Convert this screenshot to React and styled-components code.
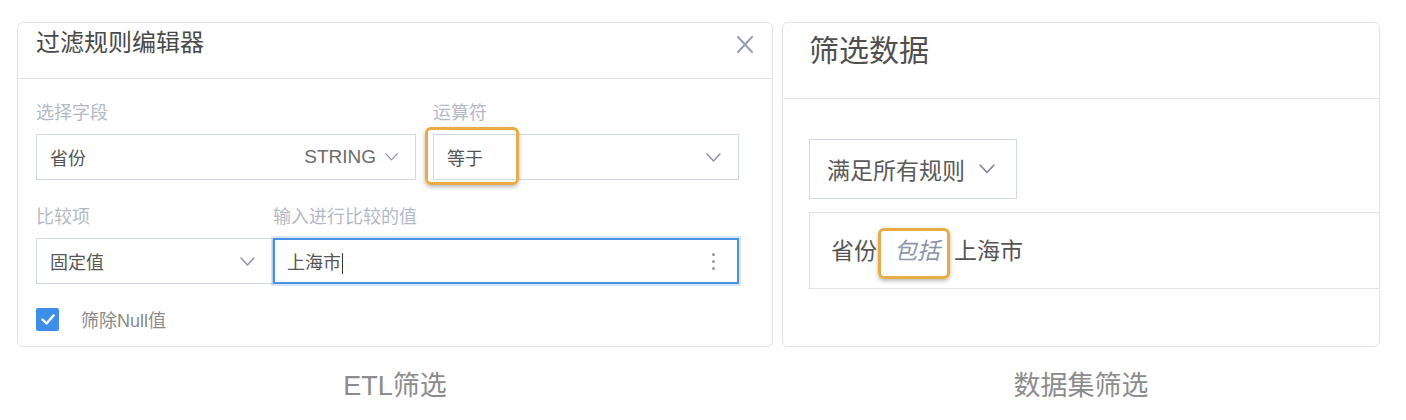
import React from "react";
import styled, { createGlobalStyle } from "styled-components";

const Global = createGlobalStyle`
  html, body { margin: 0; padding: 0; background: #fff; }
  body { font-family: "Liberation Sans", "Noto Sans CJK SC", sans-serif; }
  * { box-sizing: border-box; }
`;

const Page = styled.div`
  display: flex;
  align-items: flex-start;
  gap: 9px;
  padding: 22px 0 0 17px;
  width: 1406px;
  height: 420px;
`;

const Figure = styled.div`
  display: flex;
  flex-direction: column;
  align-items: center;
  width: ${(p) => p.$w}px;
`;

const Panel = styled.div`
  width: 100%;
  height: 325px;
  border: 1px solid #e3e3e3;
  border-radius: 6px;
  background: #fff;
  overflow: hidden;
`;

const Caption = styled.div`
  margin-top: 22px;
  font-size: 27px;
  line-height: 34px;
  color: #8c8c8c;
`;

/* ---------- Left: ETL editor ---------- */
const EditorHeader = styled.div`
  height: 56px;
  display: flex;
  align-items: flex-start;
  justify-content: space-between;
  padding: 4px 19px 0 18px;
  border-bottom: 1px solid #dfe4ec;
`;

const EditorTitle = styled.div`
  font-size: 24px;
  line-height: 32px;
  color: #4a4a4a;
`;

const CloseBtn = styled.svg`
  margin-top: 9px;
  width: 16px;
  height: 17px;
`;

const EditorBody = styled.div`
  padding: 22px 33px 0 18px;
`;

const Row = styled.div`
  display: grid;
  grid-template-columns: ${(p) => p.$cols};
  column-gap: ${(p) => p.$gap}px;
  margin-bottom: ${(p) => p.$mb}px;
`;

const Field = styled.div`
  display: flex;
  flex-direction: column;
  position: relative;
`;

const Label = styled.div`
  font-size: 18px;
  line-height: 24px;
  color: #b3bac6;
  margin-bottom: 9px;
`;

const Box = styled.div`
  position: relative;
  height: 46px;
  display: flex;
  align-items: center;
  padding: 0 ${(p) => (p.$active ? 16 : 17)}px 0 ${(p) => (p.$active ? 12 : 13)}px;
  border: ${(p) => (p.$active ? "2px solid #4a90e8" : "1px solid #d3d9e2")};
  box-shadow: ${(p) => (p.$active ? "0 0 0 2px rgba(74,144,232,0.22)" : "none")};
  background: #fff;
  font-size: 18px;
  color: #555;
  z-index: ${(p) => (p.$active ? 1 : 0)};
`;

const BoxText = styled.span`
  flex: 1;
  white-space: nowrap;
`;

const TypeTag = styled.span`
  font-size: 19px;
  color: #6b6b6b;
  margin-right: 9px;
`;

const Caret = styled.span`
  display: inline-block;
  width: 1px;
  height: 21px;
  background: #333;
  vertical-align: middle;
  margin-left: 1px;
`;

const Highlight = styled.div`
  position: absolute;
  left: ${(p) => p.$l}px;
  top: ${(p) => p.$t}px;
  width: ${(p) => p.$w}px;
  height: ${(p) => p.$h}px;
  border: 3px solid #e9ab45;
  border-radius: 6px;
  box-shadow: 0 2px 4px rgba(0, 0, 0, 0.28);
  pointer-events: none;
  z-index: 2;
`;

const Kebab = styled.span`
  display: flex;
  flex-direction: column;
  gap: 4px;
  margin-right: 6px;
  & > i {
    width: 3px;
    height: 3px;
    border-radius: 50%;
    background: #9a9a9a;
  }
`;

const CheckRow = styled.label`
  display: flex;
  align-items: center;
  gap: 22px;
  margin-top: 22px;
  font-size: 18px;
  color: #8a8a8a;
`;

const CheckBox = styled.span`
  width: 23px;
  height: 23px;
  border-radius: 2px;
  background: #3d8ee8;
  display: flex;
  align-items: center;
  justify-content: center;
`;

/* ---------- Right: dataset filter ---------- */
const DataHeader = styled.div`
  height: 76px;
  padding: 8px 26px 0;
  border-bottom: 1px solid #dfe4ec;
`;

const DataTitle = styled.div`
  font-size: 30px;
  line-height: 40px;
  color: #4f4f4f;
`;

const DataBody = styled.div`
  padding: 40px 0 0 26px;
  display: flex;
  flex-direction: column;
  align-items: flex-start;
  gap: 13px;
`;

const MatchSelect = styled.div`
  height: 60px;
  width: 208px;
  display: flex;
  align-items: center;
  gap: 14px;
  padding-left: 17px;
  border: 1px solid #d3d9e2;
  font-size: 23px;
  color: #5a5a5a;
`;

const RuleBox = styled.div`
  align-self: stretch;
  height: 77px;
  display: flex;
  align-items: center;
  padding-left: 21px;
  border: 1px solid #dfe3ea;
  border-right: none;
  font-size: 23px;
  line-height: 30px;
  color: #555;
`;

const Op = styled.span`
  position: relative;
  font-style: italic;
  color: #8b97aa;
  margin: 0 14px 0 17px;
`;

const Chevron = ({ w = 14, color = "#8a96a8" }) => (
  <svg width={w} height={w * 0.6} viewBox="0 0 14 8.4" fill="none">
    <path d="M1 1l6 6.4 6-6.4" stroke={color} strokeWidth="1.4" strokeLinecap="round" strokeLinejoin="round" />
  </svg>
);

export default function App() {
  return (
    <>
      <Global />
      <Page>
        <Figure $w={756}>
          <Panel>
            <EditorHeader>
              <EditorTitle>过滤规则编辑器</EditorTitle>
              <CloseBtn viewBox="0 0 16 17" fill="none">
                <path d="M1 1l14 15M15 1L1 16" stroke="#93a0b4" strokeWidth="2" strokeLinecap="round" />
              </CloseBtn>
            </EditorHeader>
            <EditorBody>
              <Row $cols="380px 306px" $gap={17} $mb={25}>
                <Field>
                  <Label>选择字段</Label>
                  <Box>
                    <BoxText>省份</BoxText>
                    <TypeTag>STRING</TypeTag>
                    <Chevron w={13} />
                  </Box>
                </Field>
                <Field>
                  <Label>运算符</Label>
                  <Box>
                    <BoxText>等于</BoxText>
                    <Chevron w={15} />
                    <Highlight $l={-9} $t={-8} $w={94} $h={58} />
                  </Box>
                </Field>
              </Row>
              <Row $cols="237px 466px" $gap={0} $mb={0}>
                <Field>
                  <Label>比较项</Label>
                  <Box>
                    <BoxText>固定值</BoxText>
                    <Chevron w={15} />
                  </Box>
                </Field>
                <Field>
                  <Label>输入进行比较的值</Label>
                  <Box $active>
                    <BoxText>
                      上海市
                      <Caret />
                    </BoxText>
                    <Kebab>
                      <i />
                      <i />
                      <i />
                    </Kebab>
                  </Box>
                </Field>
              </Row>
              <CheckRow>
                <CheckBox>
                  <svg width="14" height="11" viewBox="0 0 14 11" fill="none">
                    <path d="M1.5 5.5l4 4 7-8" stroke="#fff" strokeWidth="2.4" strokeLinecap="round" strokeLinejoin="round" />
                  </svg>
                </CheckBox>
                筛除Null值
              </CheckRow>
            </EditorBody>
          </Panel>
          <Caption>ETL筛选</Caption>
        </Figure>

        <Figure $w={598}>
          <Panel>
            <DataHeader>
              <DataTitle>筛选数据</DataTitle>
            </DataHeader>
            <DataBody>
              <MatchSelect>
                满足所有规则
                <Chevron w={16} color="#7f8a9c" />
              </MatchSelect>
              <RuleBox>
                省份
                <Op>
                  包括
                  <Highlight $l={-16} $t={-8} $w={72} $h={51} />
                </Op>
                上海市
              </RuleBox>
            </DataBody>
          </Panel>
          <Caption>数据集筛选</Caption>
        </Figure>
      </Page>
    </>
  );
}
